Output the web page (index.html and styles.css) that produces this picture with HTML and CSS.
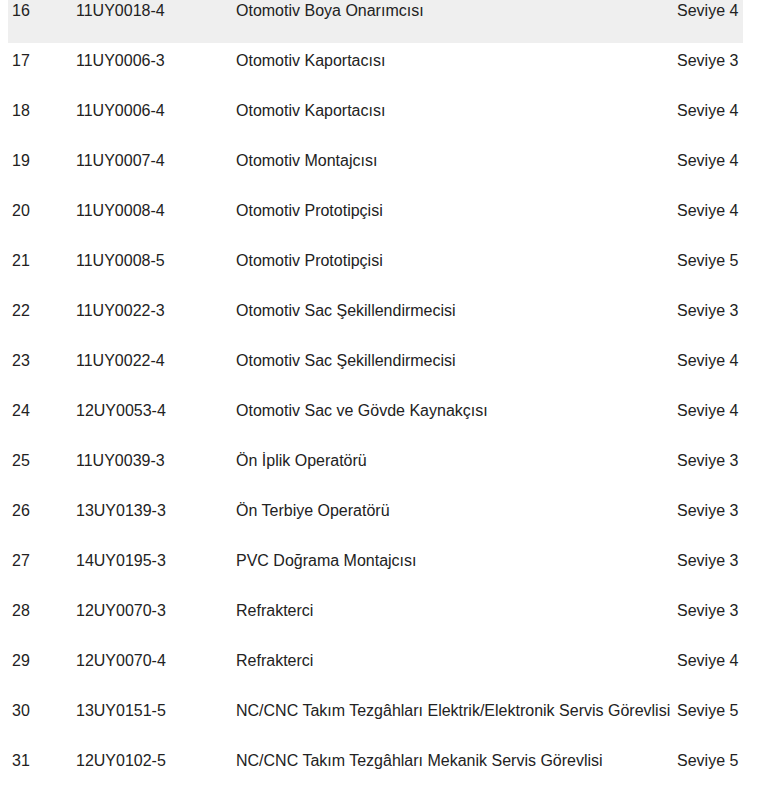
FILE: index.html
```html
<!DOCTYPE html>
<html>
<head>
<meta charset="utf-8">
<link rel="stylesheet" href="styles.css">
</head>
<body>
<div class="wrap">
<table class="list">
<colgroup><col class="c1"><col class="c2"><col class="c3"><col class="c4"></colgroup>
<tbody>
<tr class="hl"><td>16</td><td>11UY0018-4</td><td>Otomotiv Boya Onarımcısı</td><td>Seviye 4</td></tr>
<tr><td>17</td><td>11UY0006-3</td><td>Otomotiv Kaportacısı</td><td>Seviye 3</td></tr>
<tr><td>18</td><td>11UY0006-4</td><td>Otomotiv Kaportacısı</td><td>Seviye 4</td></tr>
<tr><td>19</td><td>11UY0007-4</td><td>Otomotiv Montajcısı</td><td>Seviye 4</td></tr>
<tr><td>20</td><td>11UY0008-4</td><td>Otomotiv Prototipçisi</td><td>Seviye 4</td></tr>
<tr><td>21</td><td>11UY0008-5</td><td>Otomotiv Prototipçisi</td><td>Seviye 5</td></tr>
<tr><td>22</td><td>11UY0022-3</td><td>Otomotiv Sac Şekillendirmecisi</td><td>Seviye 3</td></tr>
<tr><td>23</td><td>11UY0022-4</td><td>Otomotiv Sac Şekillendirmecisi</td><td>Seviye 4</td></tr>
<tr><td>24</td><td>12UY0053-4</td><td>Otomotiv Sac ve Gövde Kaynakçısı</td><td>Seviye 4</td></tr>
<tr><td>25</td><td>11UY0039-3</td><td>Ön İplik Operatörü</td><td>Seviye 3</td></tr>
<tr><td>26</td><td>13UY0139-3</td><td>Ön Terbiye Operatörü</td><td>Seviye 3</td></tr>
<tr><td>27</td><td>14UY0195-3</td><td>PVC Doğrama Montajcısı</td><td>Seviye 3</td></tr>
<tr><td>28</td><td>12UY0070-3</td><td>Refrakterci</td><td>Seviye 3</td></tr>
<tr><td>29</td><td>12UY0070-4</td><td>Refrakterci</td><td>Seviye 4</td></tr>
<tr><td>30</td><td>13UY0151-5</td><td>NC/CNC Takım Tezgâhları Elektrik/Elektronik Servis Görevlisi</td><td>Seviye 5</td></tr>
<tr><td>31</td><td>12UY0102-5</td><td>NC/CNC Takım Tezgâhları Mekanik Servis Görevlisi</td><td>Seviye 5</td></tr>
</tbody>
</table>
</div>
</body>
</html>
```
FILE: styles.css
```css
html, body {
  margin: 0;
  padding: 0;
  background: #fff;
}
body {
  padding: 0 8px;
  font-family: "Liberation Sans", Arial, sans-serif;
  font-size: 16px;
  color: #222;
}
.wrap {
  margin-top: -7px;
}
.list {
  width: 735px;
  border-collapse: collapse;
  table-layout: fixed;
}
.c1 { width: 64px; }
.c2 { width: 160px; }
.c3 { width: 441px; }
.c4 { width: 70px; }
.list td {
  height: 50px;
  box-sizing: border-box;
  padding: 8px 4px 0 4px;
  vertical-align: top;
  line-height: 20px;
  white-space: nowrap;
}
.list tr.hl td {
  background: #efefef;
}
```
